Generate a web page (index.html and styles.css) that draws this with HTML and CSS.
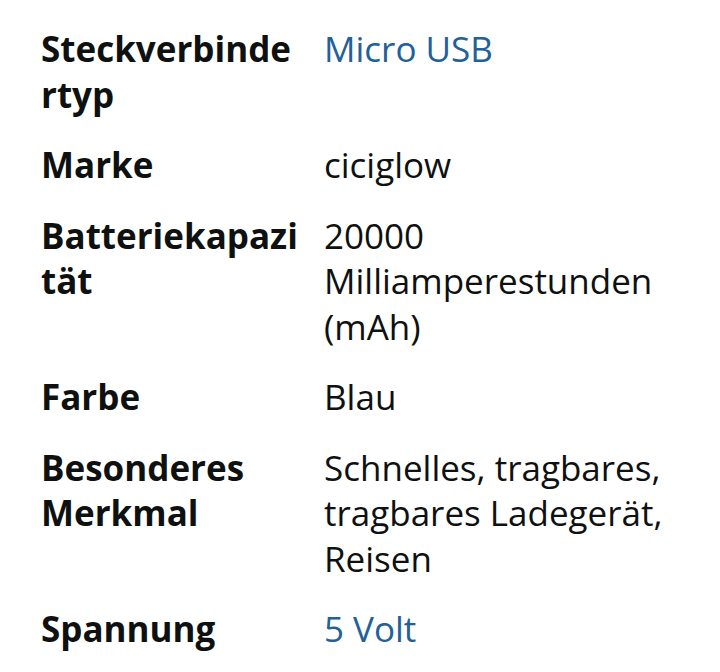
FILE: index.html
```html
<!DOCTYPE html>
<html lang="de">
<head>
<meta charset="utf-8">
<link rel="stylesheet" href="styles.css">
</head>
<body>
<div class="specs">
  <div class="row">
    <div class="label">Steckverbinde<wbr>rtyp</div>
    <div class="value link">Micro USB</div>
  </div>
  <div class="row">
    <div class="label">Marke</div>
    <div class="value">ciciglow</div>
  </div>
  <div class="row">
    <div class="label">Batteriekapazi<wbr>tät</div>
    <div class="value">20000 Milliamperestunden (mAh)</div>
  </div>
  <div class="row">
    <div class="label">Farbe</div>
    <div class="value">Blau</div>
  </div>
  <div class="row">
    <div class="label">Besonderes Merkmal</div>
    <div class="value">Schnelles, tragbares, tragbares Ladegerät, Reisen</div>
  </div>
  <div class="row">
    <div class="label">Spannung</div>
    <div class="value link">5 Volt</div>
  </div>
</div>
</body>
</html>
```
FILE: styles.css
```css
html, body {
  margin: 0;
  background: #ffffff;
}
.specs {
  display: flex;
  flex-direction: column;
  gap: 25px;
  padding: 26px 20px 0 41px;
  font-family: "Open Sans", "Noto Sans", sans-serif;
  font-size: 35px;
  line-height: 45.5px;
  color: #0f1111;
}
.row {
  display: grid;
  grid-template-columns: 283px 1fr;
}
.label {
  font-weight: 700;
  padding-right: 10px;
  overflow-wrap: anywhere;
}
.value {
  font-weight: 400;
}
.link {
  color: #22609a;
}
```
